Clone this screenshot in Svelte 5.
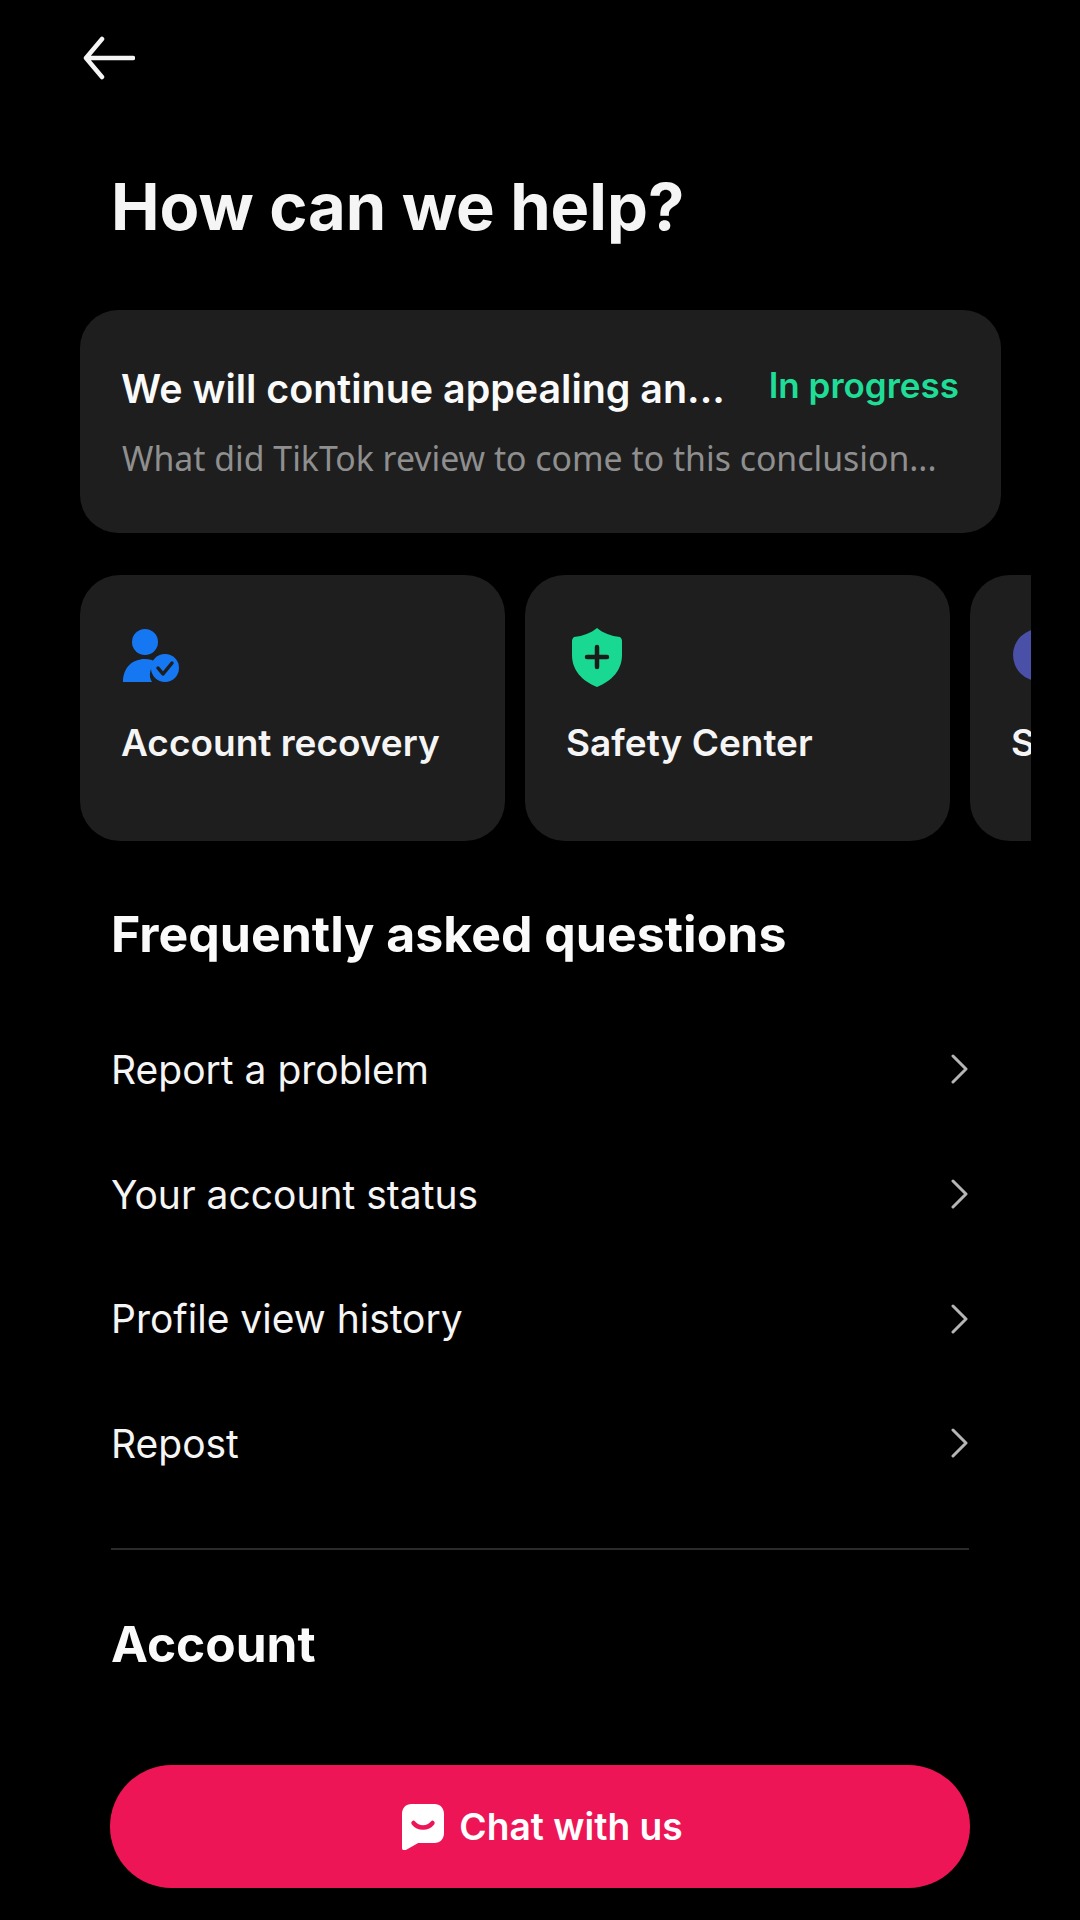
<script>
  const faqs = ['Report a problem', 'Your account status', 'Profile view history', 'Repost'];
</script>

<div class="page">
  <div class="back">
    <svg width="52" height="44" viewBox="0 0 52 44" fill="none" stroke="#f5f5f5" stroke-width="4.5" stroke-linecap="round" stroke-linejoin="round">
      <path d="M50 22H3M19 3 3 22l16 19" />
    </svg>
  </div>

  <h1>How can we help?</h1>

  <div class="status">
    <div class="status-top">
      <span class="status-title">We will continue appealing an...</span>
      <span class="progress">In progress</span>
    </div>
    <div class="status-sub">What did TikTok review to come to this conclusion...</div>
  </div>

  <div class="tiles">
    <div class="tile">
      <svg class="ico" width="60" height="60" viewBox="0 0 60 60">
        <circle cx="24" cy="14" r="13" fill="#1677f2" />
        <path d="M2 54c0-14 9-23 22-23 4 0 8 1 11 3-6 5-8 14-4 20Z" fill="#1677f2" />
        <circle cx="44" cy="40" r="14" fill="#1677f2" />
        <path d="M37 40l5 6 9-11" fill="none" stroke="#1e1e1e" stroke-width="3.5" stroke-linecap="round" stroke-linejoin="round" />
      </svg>
      <span>Account recovery</span>
    </div>
    <div class="tile">
      <svg class="ico" width="60" height="60" viewBox="0 0 60 60">
        <path d="M31 0c6 5 14 8 23 9 1 1 2 2 2 4v14c0 15-10 26-25 32C16 53 6 42 6 27V13c0-2 1-3 2-4 9-1 17-4 23-9Z" fill="#19d992" />
        <path d="M31 19v20M21 29h20" fill="none" stroke="#1b1b1b" stroke-width="4.5" stroke-linecap="round" />
      </svg>
      <span>Safety Center</span>
    </div>
    <div class="tile">
      <svg class="ico" width="60" height="60" viewBox="0 0 60 60">
        <circle cx="28" cy="27" r="26" fill="#4a4fa8" />
      </svg>
      <span>Support</span>
    </div>
  </div>

  <h2 class="faq">Frequently asked questions</h2>

  <ul>
    {#each faqs as q}
      <li>
        <span>{q}</span>
        <svg width="18" height="30" viewBox="0 0 18 30" fill="none" stroke="#b5b5b5" stroke-width="3" stroke-linecap="round" stroke-linejoin="round">
          <path d="M2 2l13 13L2 28" />
        </svg>
      </li>
    {/each}
  </ul>

  <hr />

  <h2 class="account">Account</h2>

  <button>
    <svg width="42" height="46" viewBox="0 0 44 46" preserveAspectRatio="none">
      <path d="M10 0h24c6 0 10 4 10 10v19c0 6-4 10-10 10H17L4 46c-2 1-4 0-4-2V10C0 4 4 0 10 0Z" fill="#fff" />
      <path d="M12 19c5 6 15 6 20 0" fill="none" stroke="#ee1556" stroke-width="4.5" stroke-linecap="round" />
    </svg>
    <span>Chat with us</span>
  </button>
</div>

<style>
  :global(body) {
    margin: 0;
    background: #000;
  }
  .page {
    position: relative;
    width: 1080px;
    height: 1920px;
    overflow: hidden;
    background: #000;
    font-family: Inter, "Liberation Sans", sans-serif;
    color: #fff;
    box-sizing: border-box;
    padding-top: 36px;
  }
  .back {
    margin-left: 83px;
    height: 44px;
  }
  .back svg {
    display: block;
  }
  h1 {
    margin: 89px 0 0 111px;
    font-size: 65px;
    line-height: 76px;
    font-weight: 700;
    color: #f5f5f5;
  }
  .status {
    margin: 65px 0 0 80px;
    width: 921px;
    height: 223px;
    box-sizing: border-box;
    padding: 56px 42px 0 41px;
    background: #1e1e1e;
    border-radius: 38px;
  }
  .status-top {
    display: flex;
    justify-content: space-between;
    align-items: center;
    height: 46px;
  }
  .status-title {
    font-size: 39.4px;
    font-weight: 600;
    color: #fafafa;
  }
  .progress {
    font-size: 35px;
    font-weight: 600;
    color: #1fdc97;
    margin-top: -8px;
  }
  .status-sub {
    margin: 23px 0 0 1px;
    font-family: "Noto Sans", sans-serif;
    font-size: 33.8px;
    line-height: 46px;
    color: #8f8f8f;
  }
  .tiles {
    display: flex;
    gap: 20px;
    width: 951px;
    margin: 42px 0 0 80px;
    overflow: hidden;
  }
  .tile {
    flex: 0 0 425px;
    height: 266px;
    box-sizing: border-box;
    padding: 53px 41px 0;
    background: #1e1e1e;
    border-radius: 40px;
  }
  .ico {
    display: block;
    margin-bottom: 33px;
  }
  .tile span {
    font-size: 37px;
    line-height: 44px;
    font-weight: 600;
    color: #f5f5f5;
  }
  h2 {
    margin: 0 0 0 111px;
    font-size: 49.6px;
    line-height: 56px;
    font-weight: 700;
    color: #fafafa;
  }
  .faq {
    margin-top: 65px;
    font-size: 50px;
  }
  ul {
    list-style: none;
    margin: 45px 0 0 111px;
    padding: 0;
    width: 858px;
  }
  li {
    display: flex;
    justify-content: space-between;
    align-items: center;
    height: 124.7px;
    font-size: 39px;
    color: #f5f5f5;
  }
  hr {
    margin: 42px 0 0 111px;
    width: 858px;
    height: 2px;
    border: 0;
    background: #2a2a2a;
  }
  .account {
    margin-top: 66px;
  }
  button {
    position: absolute;
    left: 110px;
    top: 1765px;
    width: 860px;
    height: 123px;
    border: 0;
    padding: 0 0 0 5px;
    border-radius: 62px;
    background: #ee1556;
    color: #fff;
    display: flex;
    align-items: center;
    justify-content: center;
    gap: 15px;
    font-family: inherit;
    font-size: 37.2px;
    font-weight: 600;
  }
</style>
